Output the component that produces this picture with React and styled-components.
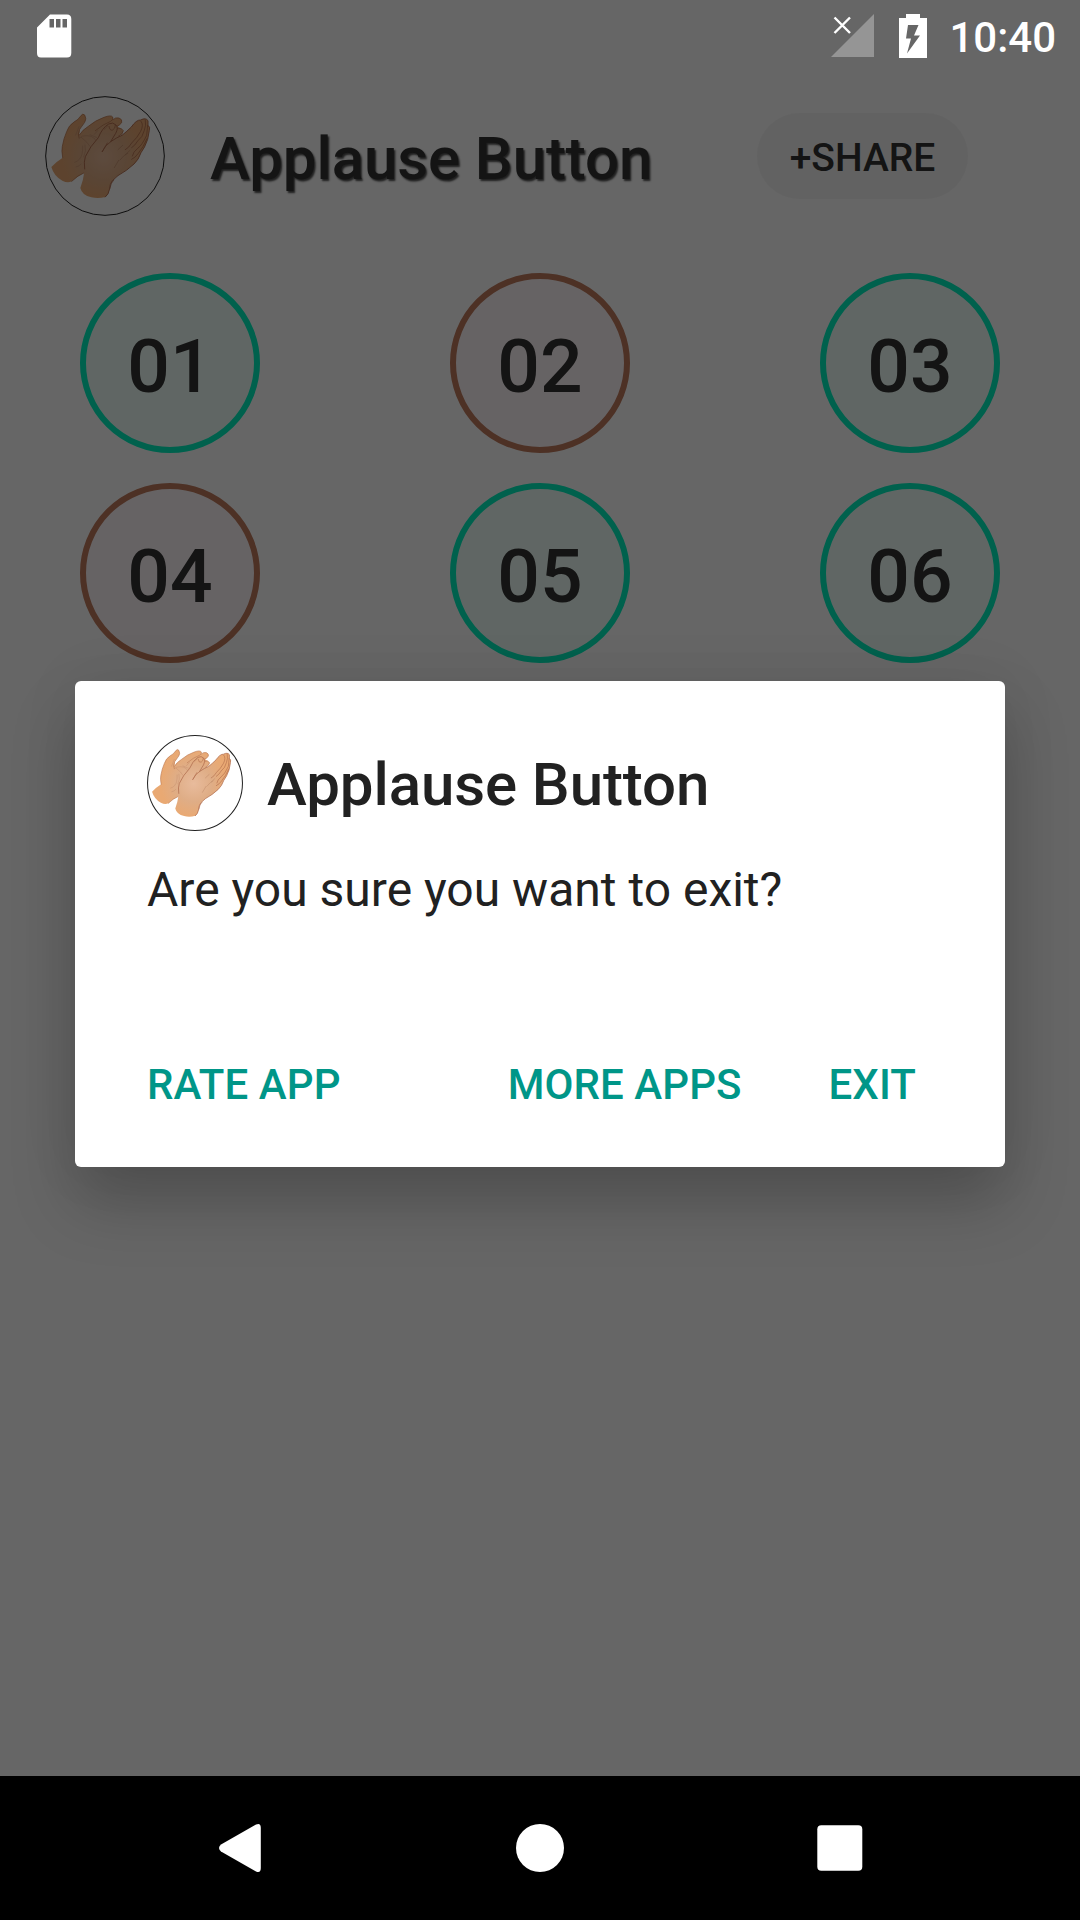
import React from "react";
import styled, { createGlobalStyle } from "styled-components";

const GlobalStyle = createGlobalStyle`
  html, body { margin: 0; padding: 0; background: #fff; }
  * { box-sizing: border-box; }
  button { font: inherit; border: 0; padding: 0; margin: 0; }
`;

const Screen = styled.div`
  position: relative;
  display: flex;
  flex-direction: column;
  width: 1080px;
  height: 1920px;
  overflow: hidden;
  background: #fff;
  font-family: Roboto, "Liberation Sans", sans-serif;
`;

const Content = styled.main`
  flex: 1;
  padding-top: 72px;
`;

const Header = styled.header`
  display: flex;
  align-items: center;
  height: 168px;
  padding: 0 112px 0 45px;
`;

const Title = styled.h1`
  flex: 1;
  margin: 0 0 0 45px;
  padding-top: 5px;
  font-size: 60px;
  font-weight: 500;
  line-height: 70px;
  letter-spacing: -0.09px;
  color: #323232;
  text-shadow: 1.5px 1.5px 2px rgba(0, 0, 0, 0.7);
`;

const ShareButton = styled.button`
  width: 211px;
  height: 86px;
  padding-top: 3px;
  border-radius: 43px;
  background: #f6f6f6;
  box-shadow: 0 0 2px #fafafa;
  color: #323232;
  font-size: 39px;
  font-weight: 500;
`;

const SoundGrid = styled.section`
  display: grid;
  grid-template-columns: repeat(3, 180px);
  justify-content: space-between;
  row-gap: 30px;
  padding: 33px 80px 0;
`;

const SoundButton = styled.button`
  width: 180px;
  height: 180px;
  padding-top: 5px;
  border-radius: 50%;
  border: 6px solid ${(p) => (p.$tone === "green" ? "#00f2c0" : "#c07a5c")};
  background: ${(p) => (p.$tone === "green" ? "#f0fff9" : "#fff7f9")};
  color: #323232;
  font-size: 75px;
  font-weight: 500;
`;

const Scrim = styled.div`
  position: absolute;
  inset: 0;
  display: flex;
  flex-direction: column;
  background: rgba(0, 0, 0, 0.6);
`;

const StatusBar = styled.div`
  display: flex;
  align-items: center;
  height: 72px;
  padding: 0 24px 0 37px;
  color: #fff;
`;

const StatusIcon = styled.svg`
  display: block;
  flex: none;
  width: ${(p) => p.$w}px;
  height: 44px;
  margin-left: ${(p) => p.$gap || 0}px;
`;

const Spacer = styled.div`
  flex: 1;
`;

const Clock = styled.time`
  margin-left: 22px;
  padding-top: 3px;
  font-size: 42px;
  font-weight: 500;
`;

const DialogArea = styled.div`
  flex: 1;
  padding: 609px 75px 0;
`;

const Dialog = styled.section`
  display: flex;
  flex-direction: column;
  height: 486px;
  padding: 54px 72px 0;
  border-radius: 6px;
  background: #fff;
  color: #212121;
  box-shadow: 0 36px 64px rgba(0, 0, 0, 0.21), 0 0 60px rgba(0, 0, 0, 0.07);
`;

const DialogHeading = styled.div`
  display: flex;
  align-items: center;
  gap: 24px;
  height: 96px;
`;

const DialogTitle = styled.h2`
  margin: 0;
  padding-top: 4px;
  font-size: 60px;
  font-weight: 500;
  line-height: 70px;
  letter-spacing: -0.09px;
`;

const Message = styled.p`
  margin: 31px 0 0;
  font-size: 48px;
  line-height: 56px;
`;

const Actions = styled.div`
  display: flex;
  margin-top: 142px;
  padding-right: 17px;
`;

const ActionButton = styled.button`
  background: none;
  color: #009688;
  font-size: 42px;
  font-weight: 500;
  line-height: 50px;
  letter-spacing: 0.08px;
  margin-left: ${(p) => p.$gap || "0"};
`;

const NavBar = styled.nav`
  display: flex;
  justify-content: space-between;
  align-items: center;
  height: 144px;
  padding: 0 216px;
  background: #000;
`;

const NavIcon = styled.svg`
  display: block;
  width: 48px;
  height: 48px;
  fill: #fff;
`;

const Logo = styled.svg`
  display: block;
  flex: none;
  width: ${(p) => p.$size}px;
  height: ${(p) => p.$size}px;
`;

function ClapLogo({ size, id, ring = "#222", ringWidth = 3 }) {
  return (
    <Logo $size={size} viewBox="45 33 360 360">
      <defs>
        <radialGradient id={id} cx="220" cy="215" r="125" gradientUnits="userSpaceOnUse">
          <stop offset="0" stopColor="#e8bb9c" />
          <stop offset="0.55" stopColor="#dfad86" />
          <stop offset="1" stopColor="#e9a973" />
        </radialGradient>
      </defs>
      <circle cx="225" cy="213" r="178" fill="#fff" stroke={ring} strokeWidth={ringWidth} />
      <g strokeLinecap="round" strokeLinejoin="round">
        <path
          d="M64 246Q80 229 98 218Q94 196 97 184Q101 160 110 140Q116 121 132 111Q146 104 151 94Q159 83 164 90Q171 102 164 112L149 133Q150 142 148 149Q158 134 175 124Q196 106 222 97Q243 89 248 96Q251 99 249 105Q256 96 267 99Q278 103 275 113Q270 120 263 125Q274 128 280 137Q279 148 267 154L240 185L195 235L163 263Q141 275 125 289Q113 296 97 287Q72 274 64 246Z"
          fill={`url(#${id})`}
        />
        <path
          d="M98 218Q94 196 97 184Q101 160 110 140Q116 121 132 111Q146 104 151 94Q159 83 164 90Q171 102 164 112L149 133Q142 147 147 159M148 150Q158 134 175 124Q196 106 222 97Q243 89 248 96Q252 103 242 109Q220 117 196 137M249 104Q256 96 267 99Q278 103 275 113Q270 120 259 125M260 131Q274 127 280 137Q279 148 265 154M163 263Q144 270 125 289"
          fill="none"
          stroke="#b97650"
          strokeWidth="2.2"
        />
        <path
          d="M147 160Q157 150 170 152Q184 151 194 161Q204 172 199 184M154 157Q174 173 180 184M180 149L201 158M158 183Q159 211 149 222Q142 230 134 232M138 246Q149 244 153 237M147 125L137 150M165 180Q170 199 161 216M204 136L193 148"
          fill="none"
          stroke="#c58f6d"
          strokeWidth="1.7"
        />
        <path
          d="M151 309Q160 285 163 260Q161 229 166 215Q180 184 205 158Q217 128 236 117Q249 110 258 120Q266 129 257 145L242 170Q261 157 276 151Q291 139 304 126Q319 104 332 105Q347 97 354 107L354 121Q361 125 358 136L353 163Q344 189 333 203Q326 224 312 237L289 256Q260 272 247 287Q239 298 239 311Q236 329 226 336Q205 342 184 337Q156 331 151 309Z"
          fill={`url(#${id})`}
        />
        <path
          d="M164 252Q161 229 166 215Q180 184 205 158Q217 128 236 117Q249 110 258 120Q266 129 257 145L242 170Q261 157 276 151Q291 139 304 126Q319 104 332 105Q347 97 354 107L354 121Q361 125 358 136L353 163Q344 189 333 203Q326 224 312 237L289 256Q260 272 247 287Q239 298 239 311Q236 329 226 336"
          fill="none"
          stroke="#b06c4c"
          strokeWidth="2.8"
        />
        <path
          d="M242 170Q225 181 216 201L232 174M333 109Q342 119 332 139Q322 158 305 174Q297 188 286 194M346 106Q349 121 343 136Q338 157 323 168Q315 182 305 188M353 121L350 151Q336 181 323 190Q309 201 307 213M351 161Q340 187 325 205Q316 218 305 223M239 311Q243 292 251 285M237 124Q239 138 248 135Q256 131 256 121"
          fill="none"
          stroke="#b06c4c"
          strokeWidth="2.3"
        />
        <path
          d="M293 205Q280 211 270 225M266 226L253 248M300 196L286 209M278 181L264 194M223 133Q232 127 234 119"
          fill="none"
          stroke="#ba8564"
          strokeWidth="1.7"
        />
      </g>
    </Logo>
  );
}

const sounds = [
  { label: "01", tone: "green" },
  { label: "02", tone: "brown" },
  { label: "03", tone: "green" },
  { label: "04", tone: "brown" },
  { label: "05", tone: "green" },
  { label: "06", tone: "green" },
];

export default function App() {
  return (
    <Screen>
      <GlobalStyle />
      <Content>
        <Header>
          <ClapLogo size={120} id="skin-header" />
          <Title>Applause Button</Title>
          <ShareButton>+SHARE</ShareButton>
        </Header>
        <SoundGrid>
          {sounds.map((s) => (
            <SoundButton key={s.label} $tone={s.tone}>
              {s.label}
            </SoundButton>
          ))}
        </SoundGrid>
      </Content>
      <Scrim>
        <StatusBar>
          <StatusIcon $w={35} viewBox="0 0 35 44">
            <path
              fill="#fff"
              fillRule="evenodd"
              d="M13 .5H30Q34.3 .5 34.3 5V39Q34.3 43.5 30 43.5H4Q0 43.5 0 39V13.500ZM12.500 5V13.500H17V5ZM19 5V13.500H23.500V5ZM25.500 5V13.500H30V5Z"
            />
          </StatusIcon>
          <Spacer />
          <StatusIcon $w={43} viewBox="0 0 43 44">
            <path d="M43 0V43H0Z" fill="#959595" />
            <path d="M3.500 3.500L19 19M19 3.500L3.500 19" stroke="#fff" strokeWidth="2.400" />
          </StatusIcon>
          <StatusIcon $w={28} $gap={25} viewBox="0 0 28 44">
            <path
              fill="#fff"
              fillRule="evenodd"
              d="M7 0H21V4H28V44H0V4H7ZM9 11L7 24.500H12L8 39.500L21 21.500H15L19.500 11Z"
            />
          </StatusIcon>
          <Clock>10:40</Clock>
        </StatusBar>
        <DialogArea>
          <Dialog>
            <DialogHeading>
              <ClapLogo size={96} id="skin-dialog" ringWidth={3.8} />
              <DialogTitle>Applause Button</DialogTitle>
            </DialogHeading>
            <Message>Are you sure you want to exit?</Message>
            <Actions>
              <ActionButton>RATE APP</ActionButton>
              <ActionButton $gap="auto">MORE APPS</ActionButton>
              <ActionButton $gap="87px">EXIT</ActionButton>
            </Actions>
          </Dialog>
        </DialogArea>
        <NavBar>
          <NavIcon viewBox="0 0 48 48">
            <path d="M40 .6Q44.800 -1.500 44.800 4V44Q44.800 49.500 40 47.400L5 27.500Q1 24 5 20.500Z" />
          </NavIcon>
          <NavIcon viewBox="0 0 48 48">
            <circle cx="24" cy="24" r="24" />
          </NavIcon>
          <NavIcon viewBox="0 0 48 48">
            <rect x="1.300" y="1.200" width="45" height="45.600" rx="4" />
          </NavIcon>
        </NavBar>
      </Scrim>
    </Screen>
  );
}
